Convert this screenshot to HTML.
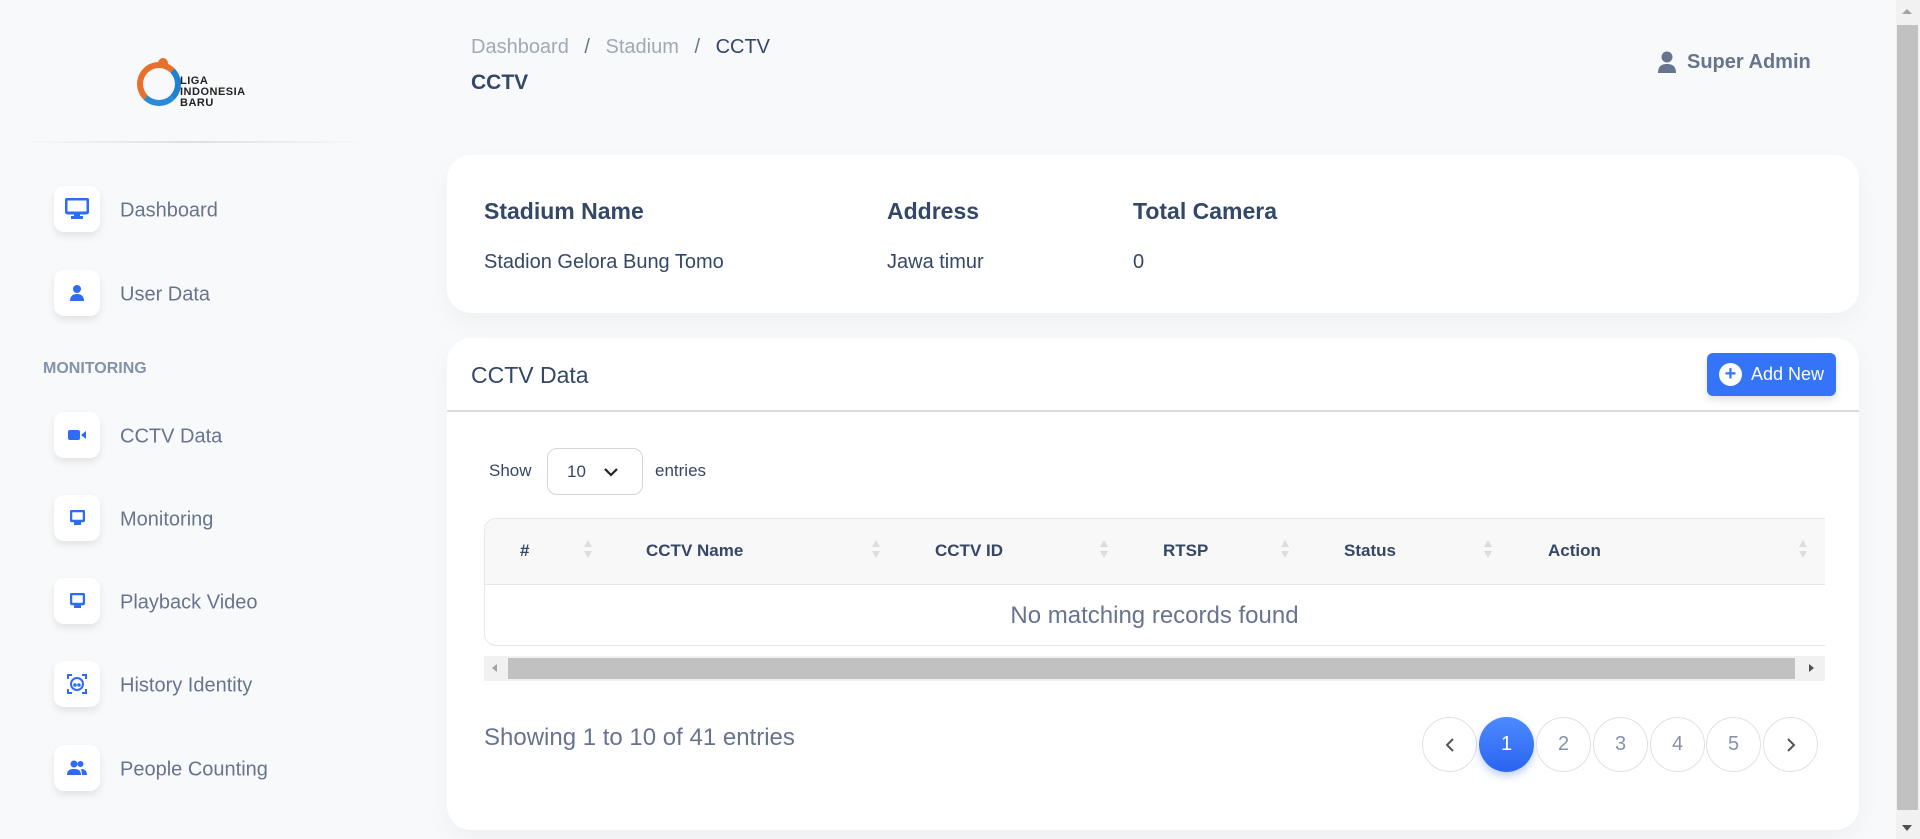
<!DOCTYPE html>
<html><head><meta charset="utf-8"><style>
*{box-sizing:border-box;margin:0;padding:0}
body{width:1920px;height:839px;overflow:hidden;background:#f8f9fb;font-family:"Liberation Sans",sans-serif;position:relative;color:#67748e}
.abs{position:absolute}
.ib{position:absolute;left:54px;width:46px;height:46px;background:#fff;border-radius:10px;box-shadow:0 4px 8px rgba(0,0,0,.09);display:flex;align-items:center;justify-content:center}
.lbl{position:absolute;left:120px;font-size:20px;color:#67748e;transform:translateY(-50%);margin-top:2px}
.card{position:absolute;background:#fff;border-radius:24px;box-shadow:0 10px 25px rgba(0,0,0,.04)}
.th{position:absolute;top:541px;font-size:17px;color:#344767;font-weight:600}
.sort{position:absolute;top:540px;width:8px;height:20px}
.sort:before{content:"";position:absolute;left:0;top:0;border:4px solid transparent;border-bottom:7px solid #ddd;border-top:0}
.sort:after{content:"";position:absolute;left:0;top:11px;border:4px solid transparent;border-top:7px solid #ddd;border-bottom:0}
.pg{position:absolute;top:717px;width:55px;height:55px;border-radius:50%;border:1px solid #dee2e6;background:#fff;display:flex;align-items:center;justify-content:center;font-size:20px;color:#8392ab}
</style></head><body>
<!-- logo -->
<div class="abs" style="left:137px;top:62px;width:44px;height:44px;border-radius:50%;border:6px solid #e8702a;border-right-color:#1f7fd0;border-bottom-color:#2a8ad8"></div>
<div class="abs" style="left:158px;top:58px;width:10px;height:10px;border-radius:50%;background:#e8702a"></div>
<div class="abs" style="left:180px;top:76px;font-size:11px;line-height:11px;font-weight:bold;color:#222;letter-spacing:.5px">LIGA<br>INDONESIA<br>BARU</div>
<div class="abs" style="left:18px;top:141px;width:350px;height:2px;background:linear-gradient(90deg,rgba(0,0,0,0),rgba(0,0,0,.1),rgba(0,0,0,0))"></div>

<div class="ib" style="top:186px"><svg width="24" height="22" viewBox="0 0 24 22"><rect x="1" y="1" width="22" height="14" rx="2" fill="none" stroke="#2f6cf6" stroke-width="3"/><rect x="9" y="15" width="6" height="4" fill="#2f6cf6"/><rect x="6" y="18" width="12" height="3" fill="#2f6cf6"/></svg></div>
<div class="lbl" style="top:209px">Dashboard</div>
<div class="ib" style="top:270px"><svg width="18" height="18" viewBox="0 0 18 18"><circle cx="9" cy="5" r="4" fill="#2f6cf6"/><path d="M2 17c0-5 3-7 7-7s7 2 7 7z" fill="#2f6cf6"/></svg></div>
<div class="lbl" style="top:293px">User Data</div>
<div class="abs" style="left:43px;top:360px;font-size:16px;font-weight:bold;color:#8392ab">MONITORING</div>
<div class="ib" style="top:412px"><svg width="18" height="10"><rect x="0" y="0" width="12" height="10" rx="2" fill="#2f6cf6"/><path d="M13 5l5-4v8z" fill="#2f6cf6"/></svg></div>
<div class="lbl" style="top:435px">CCTV Data</div>
<div class="ib" style="top:495px"><svg width="15" height="16"><rect x="1" y="1" width="13" height="10" rx="1" fill="none" stroke="#2f6cf6" stroke-width="2.5"/><rect x="4" y="12" width="7" height="3" fill="#2f6cf6"/></svg></div>
<div class="lbl" style="top:518px">Monitoring</div>
<div class="ib" style="top:578px"><svg width="15" height="16"><rect x="1" y="1" width="13" height="10" rx="1" fill="none" stroke="#2f6cf6" stroke-width="2.5"/><rect x="4" y="12" width="7" height="3" fill="#2f6cf6"/></svg></div>
<div class="lbl" style="top:601px">Playback Video</div>
<div class="ib" style="top:661px"><svg width="20" height="20" viewBox="0 0 20 20" fill="none" stroke="#2f6cf6" stroke-width="2"><path d="M1 5V1h4M15 1h4v4M19 15v4h-4M5 19H1v-4"/><circle cx="10" cy="10" r="6"/><circle cx="8" cy="11" r=".8" fill="#2f6cf6"/><circle cx="12" cy="11" r=".8" fill="#2f6cf6"/></svg></div>
<div class="lbl" style="top:684px">History Identity</div>
<div class="ib" style="top:745px"><svg width="20" height="16" viewBox="0 0 20 16"><circle cx="7" cy="4" r="3.5" fill="#2f6cf6"/><circle cx="13.5" cy="4" r="3" fill="#2f6cf6"/><path d="M0 15c0-5 3-6 7-6s7 1 7 6z" fill="#2f6cf6"/><path d="M14 9c4 0 6 2 6 6h-5c0-3-1-5-1-6z" fill="#2f6cf6"/></svg></div>
<div class="lbl" style="top:768px">People Counting</div>

<!-- header -->
<div class="abs" style="left:471px;top:36px;font-size:20px;color:#a0a8b8">Dashboard <span style="margin:0 10px;color:#67748e">/</span> Stadium <span style="margin:0 10px;color:#67748e">/</span> <span style="color:#344767">CCTV</span></div>
<div class="abs" style="left:471px;top:71px;font-size:21px;font-weight:bold;color:#344767">CCTV</div>
<svg class="abs" style="left:1657px;top:51px" width="20" height="22" viewBox="0 0 20 22"><circle cx="10" cy="6" r="5.5" fill="#67748e"/><path d="M1 22c0-7 4-9 9-9s9 2 9 9z" fill="#67748e"/></svg>
<div class="abs" style="left:1687px;top:51px;font-size:20px;font-weight:bold;color:#67748e">Super Admin</div>

<!-- card 1 -->
<div class="card" style="left:447px;top:155px;width:1412px;height:158px"></div>
<div class="abs" style="left:484px;top:198px;font-size:23px;font-weight:600;color:#344767">Stadium Name</div>
<div class="abs" style="left:887px;top:198px;font-size:23px;font-weight:600;color:#344767">Address</div>
<div class="abs" style="left:1133px;top:198px;font-size:23px;font-weight:600;color:#344767">Total Camera</div>
<div class="abs" style="left:484px;top:251px;font-size:20px;color:#344767">Stadion Gelora Bung Tomo</div>
<div class="abs" style="left:887px;top:251px;font-size:20px;color:#344767">Jawa timur</div>
<div class="abs" style="left:1133px;top:251px;font-size:20px;color:#344767">0</div>

<!-- card 2 -->
<div class="card" style="left:447px;top:338px;width:1412px;height:492px"></div>
<div class="abs" style="left:447px;top:410px;width:1412px;height:2px;background:#d9dce1"></div>
<div class="abs" style="left:471px;top:362px;font-size:23px;color:#344767">CCTV Data</div>
<div class="abs" style="left:1707px;top:353px;width:129px;height:43px;background:#3574f7;border-radius:6px;box-shadow:0 4px 8px rgba(0,0,0,.12);color:#fff;font-size:18px;display:flex;align-items:center;padding-left:12px"><span style="width:23px;height:23px;border-radius:50%;background:#fff;color:#3574f7;display:inline-flex;align-items:center;justify-content:center;font-weight:bold;font-size:20px;margin-right:9px">+</span>Add New</div>

<div class="abs" style="left:489px;top:461px;font-size:17px;color:#344767">Show</div>
<div class="abs" style="left:547px;top:448px;width:96px;height:47px;border:1px solid #d2d6da;border-radius:10px;font-size:17px;color:#344767;padding:13px 0 0 19px">10<svg style="position:absolute;left:55px;top:18px" width="16" height="10"><path d="M2 2l6 6 6-6" fill="none" stroke="#222" stroke-width="2.2"/></svg></div>
<div class="abs" style="left:655px;top:461px;font-size:17px;color:#344767">entries</div>

<div class="abs" style="left:484px;top:518px;width:1341px;height:128px;border:1px solid #e4e6ea;border-right:none;border-radius:12px 0 0 12px;overflow:hidden"><div style="height:66px;background:#f8f8f8;border-bottom:1px solid #e4e6ea"></div></div>
<div class="th" style="left:520px">#</div><div class="sort" style="left:584px"></div>
<div class="th" style="left:646px">CCTV Name</div><div class="sort" style="left:872px"></div>
<div class="th" style="left:935px">CCTV ID</div><div class="sort" style="left:1100px"></div>
<div class="th" style="left:1163px">RTSP</div><div class="sort" style="left:1281px"></div>
<div class="th" style="left:1344px">Status</div><div class="sort" style="left:1484px"></div>
<div class="th" style="left:1548px">Action</div><div class="sort" style="left:1799px"></div>
<div class="abs" style="left:484px;width:1341px;top:602px;text-align:center;font-size:24px;color:#67748e">No matching records found</div>

<div class="abs" style="left:484px;top:656px;width:1341px;height:25px;background:#f1f1f1"></div>
<div class="abs" style="left:508px;top:658px;width:1287px;height:21px;background:#c1c1c1"></div>
<div class="abs" style="left:492px;top:664px;border:4px solid transparent;border-right:5px solid #a3a3a3;border-left:0"></div>
<div class="abs" style="left:1809px;top:664px;border:4px solid transparent;border-left:5px solid #505050;border-right:0"></div>

<div class="abs" style="left:484px;top:724px;font-size:24px;color:#67748e">Showing 1 to 10 of 41 entries</div>
<div class="pg" style="left:1422px"><svg width="10" height="16"><path d="M8 2L2 8l6 6" fill="none" stroke="#555" stroke-width="2"/></svg></div>
<div class="pg" style="left:1479px;background:linear-gradient(180deg,#4d8bff,#2a64f0);border:none;color:#fff;box-shadow:0 4px 8px rgba(40,100,240,.3)">1</div>
<div class="pg" style="left:1536px">2</div>
<div class="pg" style="left:1593px">3</div>
<div class="pg" style="left:1650px">4</div>
<div class="pg" style="left:1706px">5</div>
<div class="pg" style="left:1763px"><svg width="10" height="16"><path d="M2 2l6 6-6 6" fill="none" stroke="#555" stroke-width="2"/></svg></div>

<!-- page scrollbar -->
<div class="abs" style="left:1896px;top:0;width:24px;height:839px;background:#f1f1f1"></div>
<div class="abs" style="left:1897px;top:25px;width:21px;height:785px;background:#c1c1c1"></div>
<div class="abs" style="left:1902px;top:9px;border:5px solid transparent;border-bottom:5px solid #a3a3a3;border-top:0"></div>
<div class="abs" style="left:1902px;top:825px;border:5px solid transparent;border-top:6px solid #505050;border-bottom:0"></div>
</body></html>
